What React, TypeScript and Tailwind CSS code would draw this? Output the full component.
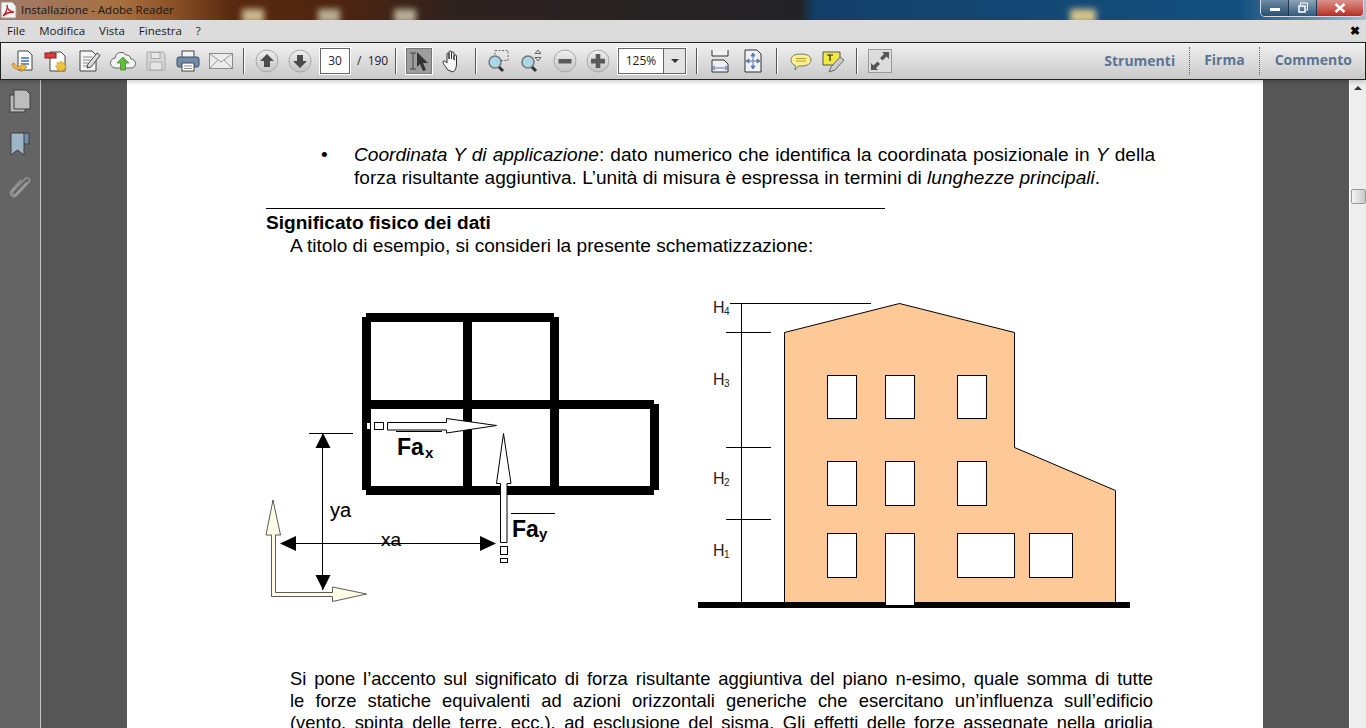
import React from 'react';

const ui = { fontFamily: '"Open Sans", "Noto Sans", sans-serif' };
const arial = 'Liberation Sans, Arial, sans-serif';

function Sep({ className }: { className: string }) {
  return <div className={`w-px h-[26px] bg-[#555] border-r border-white box-content shrink-0 ${className}`} />;
}

function RoundBtn({ kind }: { kind: 'up' | 'down' | 'minus' | 'plus' }) {
  return (
    <svg width="24" height="24" viewBox="0 0 24 24" className="shrink-0">
      <defs>
        <linearGradient id="rb" x1="0" y1="0" x2="0" y2="1">
          <stop offset="0" stopColor="#efefef" />
          <stop offset="1" stopColor="#c4c4c4" />
        </linearGradient>
      </defs>
      <circle cx="12" cy="12" r="11" fill="url(#rb)" stroke="#a8a8a8" />
      {kind === 'up' && <path d="M12 5l7 7h-4v6H9v-6H5z" fill="#4a4a4a" />}
      {kind === 'down' && <path d="M12 19l7-7h-4V6H9v6H5z" fill="#4a4a4a" />}
      {kind === 'minus' && <rect x="5.500" y="10" width="13" height="4.500" fill="#5a5a5a" />}
      {kind === 'plus' && <path d="M9.700 5h4.600v4.800H19v4.600h-4.700V19H9.700v-4.600H5V9.800h4.700z" fill="#5a5a5a" />}
    </svg>
  );
}

function Magnifier({ extra }: { extra: 'box' | 'arrows' }) {
  return (
    <svg width="24" height="24" viewBox="0 0 24 24" className="shrink-0">
      {extra === 'box' ? (
        <rect x="8" y="1.500" width="13" height="10" fill="none" stroke="#666" strokeDasharray="2 1.500" />
      ) : (
        <path d="M18 1l3 3.500h-6zM18 12l3-3.500h-6z" fill="#ddd" stroke="#666" />
      )}
      <path d="M11 17l5 5" stroke="#333" strokeWidth="3" />
      <circle cx="8" cy="13" r="6" fill="#a9d8e8" stroke="#777" strokeWidth="1.500" />
    </svg>
  );
}

function Toolbar() {
  return (
    <div className="h-[38px] bg-gradient-to-b from-[#f1f1f1] to-[#c9c9c9] border border-[#222] flex items-center shrink-0 pl-[10px] relative z-10 shadow-[0_2px_4px_rgba(0,0,0,0.18)]">
      <div className="flex items-center gap-[9px]">
        {/* create pdf */}
        <svg width="24" height="24" viewBox="0 0 24 24" className="shrink-0">
          <path d="M7 2h10l4 4v15H7z" fill="#fff" stroke="#444" />
          <path d="M10 9h8M10 12h8M10 15h8" stroke="#3a6bc0" strokeWidth="1.300" />
          <path d="M1 15c1 5 5 6 9 5v3l6-5-6-4v3c-3 1-6 0-7-3z" fill="#f0b840" stroke="#a87a1a" strokeWidth=".7" />
        </svg>
        <svg width="24" height="24" viewBox="0 0 24 24" className="shrink-0">
          <path d="M6 3h11l4 4v15H6z" fill="#fff" stroke="#444" />
          <rect x="1" y="4" width="11" height="5" fill="#e23b3b" stroke="#8a1c1c" />
          <path d="M17 12l1.500 2 2.500-.5-.5 2.500 2 1.500-2 1.500.5 2.500-2.500-.5-1.500 2-1.500-2-2.500.5.500-2.500-2-1.500 2-1.500-.5-2.500 2.500.5z" fill="#f5c33b" stroke="#b98a1a" strokeWidth=".6" />
        </svg>
        <svg width="24" height="24" viewBox="0 0 24 24" className="shrink-0">
          <path d="M3 2h12l4 4v16H3z" fill="#f5f5f5" stroke="#444" />
          <path d="M6 8h9M6 11h7M6 14h5M6 17h4" stroke="#888" />
          <path d="M10 19l1-4L20 4l3 2.500L14 18z" fill="#ddd" stroke="#444" />
        </svg>
        <svg width="26" height="24" viewBox="0 0 26 24" className="shrink-0">
          <path d="M6 19a5 5 0 0 1-1-10 6 6 0 0 1 11-3 5 5 0 0 1 5 4 4.500 4.500 0 0 1 0 9z" fill="#f2f2f2" stroke="#666" />
          <path d="M13 8l6 6h-3.500v7h-5v-7H7z" fill="#63bb3d" stroke="#3f8426" strokeWidth=".7" />
        </svg>
        <svg width="22" height="24" viewBox="0 0 22 24" className="shrink-0">
          <path d="M2 3h16l2 2v16H2z" fill="#d8d8d8" stroke="#aaa" />
          <rect x="6" y="3.500" width="9" height="6" fill="#e8e8e8" stroke="#aaa" />
          <rect x="5" y="13" width="12" height="8" fill="#e4e4e4" stroke="#aaa" />
        </svg>
        <svg width="24" height="24" viewBox="0 0 24 24" className="shrink-0">
          <rect x="6" y="2" width="12" height="7" fill="#f4f4f4" stroke="#444" />
          <rect x="1" y="8" width="22" height="10" rx="2" fill="#6f8cab" stroke="#3c4c5e" />
          <rect x="6" y="14" width="12" height="8" fill="#fff" stroke="#444" />
          <path d="M8 17h8M8 19.500h8" stroke="#888" />
        </svg>
        <svg width="24" height="24" viewBox="0 0 24 24" className="shrink-0">
          <rect x="0.500" y="4.500" width="23" height="15" fill="#ececec" stroke="#8a8a8a" />
          <path d="M1 5l11 8 11-8M1 19l8-8M23 19l-8-8" fill="none" stroke="#9a9a9a" />
        </svg>
      </div>
      <Sep className="ml-[10px] mr-[10px]" />
      <div className="flex items-center gap-[9px]">
        <RoundBtn kind="up" />
        <RoundBtn kind="down" />
      </div>
      <div className="w-[30px] h-[26px] ml-[8px] shrink-0 bg-white border border-[#666] outline outline-1 outline-white flex items-center justify-center text-[12px] text-[#222]" style={ui}>30</div>
      <div className="ml-[7px] w-[32px] shrink-0 text-[12px] text-[#222] whitespace-pre" style={ui}>/  190</div>
      <Sep className="ml-[6px] mr-[9px]" />
      <div className="w-[26px] h-[26px] shrink-0 bg-[#9d9d9d] border border-[#777] outline outline-1 outline-white flex items-center justify-center">
        <svg width="24" height="24" viewBox="0 0 24 24">
          <path d="M3 4h6M3 20h6M6 4v16" stroke="#444" fill="none" />
          <path d="M10 3l11 11h-5l3 7-3 1-3-7-3 3z" fill="#333" />
        </svg>
      </div>
      <svg width="24" height="24" viewBox="0 0 24 24" className="shrink-0 ml-[9px]">
        <path d="M7 21c-2-3-5-6-5-8 0-1.500 2-1.500 3 0l1 1V5c0-1.500 2-1.500 2 0v5V3c0-1.500 2.500-1.500 2.500 0v7-6c0-1.500 2.500-1.500 2.500 0v7-4c0-1.500 2.500-1.500 2.500 0v8c0 4-1.500 7-3.500 8z" fill="#f6f6f6" stroke="#333" />
      </svg>
      <Sep className="ml-[10px] mr-[10px]" />
      <div className="flex items-center gap-[9px]">
        <Magnifier extra="box" />
        <Magnifier extra="arrows" />
        <RoundBtn kind="minus" />
        <RoundBtn kind="plus" />
      </div>
      <div className="ml-[8px] w-[68px] h-[26px] shrink-0 bg-white border border-[#666] outline outline-1 outline-white flex items-center text-[12px] text-[#222]" style={ui}>
        <div className="flex-1 text-center">125%</div>
        <div className="w-[22px] h-full border-l border-[#666] bg-[#e4e4e4] flex items-center justify-center">
          <div className="w-0 h-0 border-x-[4px] border-t-[4px] border-x-transparent border-t-[#333]" />
        </div>
      </div>
      <Sep className="ml-[10px] mr-[10px]" />
      <svg width="24" height="24" viewBox="0 0 24 24" className="shrink-0 mr-[9px]">
        <path d="M4 1v6h16V1M4 23V11h12l4 4v8z" fill="#f0f0f0" stroke="#333" />
        <path d="M4 19h16M4 19l3-2M4 19l3 2M20 19l-3-2M20 19l-3 2" stroke="#5a78b0" fill="none" />
      </svg>
      <svg width="24" height="24" viewBox="0 0 24 24" className="shrink-0">
        <path d="M4 1h12l4 4v18H4z" fill="#f0f0f0" stroke="#333" />
        <path d="M12 5v14M6 12h12M12 4l-2 3h4zM12 20l-2-3h4zM5 12l3-2v4zM19 12l-3-2v4z" stroke="#5a78b0" fill="#5a78b0" />
      </svg>
      <Sep className="ml-[11px] mr-[11px]" />
      <svg width="24" height="24" viewBox="0 0 24 24" className="shrink-0 mr-[9px]">
        <path d="M2 11c0-4 4-6 10-6s10 2 10 6-4 6-10 6H9.500L6 21l.5-4.500C3.500 15.500 2 13.500 2 11z" fill="#f7f08c" stroke="#777" />
        <path d="M7 9.500h10M7 12h10" stroke="#b59a2a" />
      </svg>
      <svg width="24" height="24" viewBox="0 0 24 24" className="shrink-0">
        <path d="M1 3h17v5l-5 8H1z" fill="#f0ea3c" stroke="#555" />
        <path d="M5 6h6M8 6v6" stroke="#222" strokeWidth="1.200" />
        <path d="M7 23l2-5 9-10 4 3-9 10z" fill="#ccc" stroke="#666" />
      </svg>
      <Sep className="ml-[10px] mr-[10px]" />
      <div className="w-[24px] h-[24px] shrink-0 bg-[#dcdcdc] border border-[#999] flex items-center justify-center">
        <svg width="22" height="22" viewBox="0 0 22 22">
          <path d="M13 2h7v7l-2.500-2.500-4 4-2.500-2.500 4-4zM9 20H2v-7l2.500 2.500 4-4 2.500 2.500-4 4z" fill="#555" />
        </svg>
      </div>
      <div className="flex-1" />
      <div className="flex items-center h-[28px] text-[14px] font-bold text-[#5b7494]" style={ui}>
        <div className="pr-[14px] leading-[26px]">Strumenti</div>
        <div className="h-full border-l border-dotted border-[#666] pl-[14px] pr-[14px]">
          <div className="leading-[26px]">Firma</div>
        </div>
        <div className="h-full border-l border-dotted border-[#666] pl-[15px] pr-[13px]">
          <div className="leading-[26px]">Commento</div>
        </div>
      </div>
    </div>
  );
}

function SideRail() {
  return (
    <div className="w-[41px] shrink-0 bg-[#646464] border-r border-[#c8c8c8] flex flex-col items-center pt-[9px] gap-[19px]">
      <svg width="22" height="24" viewBox="0 0 22 24">
        <rect x="1" y="6" width="15" height="17" fill="#b8b8b8" stroke="#3f3f3f" />
        <path d="M5 1h12l4 4v15H5z" fill="#bdbdbd" stroke="#3f3f3f" />
      </svg>
      <svg width="20" height="24" viewBox="0 0 20 24">
        <rect x="12" y="1" width="7" height="11" fill="#6f90a8" stroke="#3f3f3f" />
        <path d="M1 1h13v22l-6.500-5L1 23z" fill="#9cb6c8" stroke="#3f3f3f" />
      </svg>
      <svg width="22" height="24" viewBox="0 0 22 24">
        <path d="M18 7L7 19c-2 2-5-1-3-3L16 4c3-3 6 1 4 3L8 20c-4 4-9-1-5-5l9-10" fill="none" stroke="#9a9a9a" strokeWidth="1.400" />
      </svg>
    </div>
  );
}

function PlanDiagram() {
  return (
    <svg width="410" height="310" viewBox="0 0 410 310" className="block shrink-0">
      {/* frame */}
      <g fill="#000">
        <rect x="106" y="13" width="188" height="9" />
        <rect x="106" y="100" width="288" height="9" />
        <rect x="106" y="186" width="288" height="9" />
        <rect x="102" y="17" width="9" height="173" />
        <rect x="203" y="17" width="9" height="173" />
        <rect x="290" y="17" width="9" height="173" />
        <rect x="390" y="104" width="9" height="86" />
      </g>
      {/* force x */}
      <rect x="107" y="123" width="3" height="6" fill="#fff" />
      <rect x="114.500" y="122.500" width="9" height="7" fill="#fff" stroke="#000" />
      <path d="M127.500 122.500h59v-4l50 7-50 7.500v-3h-59z" fill="#fff" stroke="#000" />
      <path d="M136 131.500h46" stroke="#000" />
      <text x="137" y="155" fontFamily={arial} fontSize="23" fontWeight="700">Fa</text>
      <text x="165" y="158" fontFamily={arial} fontSize="15" fontWeight="700">x</text>
      {/* force y */}
      <path d="M240.500 242.500v-59h-4l7-50 7.500 50h-4v59z" fill="#fff" stroke="#000" />
      <rect x="240.500" y="246.500" width="7" height="8" fill="#fff" stroke="#000" />
      <rect x="240.500" y="258.500" width="7" height="4" fill="#fff" stroke="#000" />
      <path d="M251 213.500h44" stroke="#000" />
      <text x="252" y="237" fontFamily={arial} fontSize="23" fontWeight="700">Fa</text>
      <text x="279" y="239" fontFamily={arial} fontSize="15" fontWeight="700">y</text>
      {/* dimensions */}
      <path d="M49 133.500h44M62.500 134v156M25 243.500h205" stroke="#000" />
      <path d="M63 133l7.500 15h-15zM63 290l7.500-15h-15zM20 243.500l16-7.500v15zM236 243.500l-16-7.500v15z" fill="#000" />
      <text x="70" y="217" fontFamily={arial} fontSize="20" stroke="#000" strokeWidth=".15">ya</text>
      <text x="121" y="246" fontFamily={arial} fontSize="19" stroke="#000" strokeWidth=".15">xa</text>
      {/* axes */}
      <path d="M11.500 296.500V235H6l7-35 7.500 35h-5v57.500h57V287l34 7-34 7.500v-5z" fill="#fffde5" stroke="#333" strokeWidth="0.800" />
    </svg>
  );
}

function BuildingDiagram() {
  return (
    <svg width="450" height="320" viewBox="0 0 450 320" className="block shrink-0">
      <path d="M94.500 308V37.500L209.500 8.500 324.500 37.500V152.500L425.500 195.500V308z" fill="#fec996" stroke="#000" />
      <g fill="#fff" stroke="#000">
        <rect x="137.500" y="80.500" width="29" height="43" />
        <rect x="195.500" y="80.500" width="29" height="43" />
        <rect x="267.500" y="80.500" width="29" height="43" />
        <rect x="137.500" y="166.500" width="29" height="44" />
        <rect x="195.500" y="166.500" width="29" height="44" />
        <rect x="267.500" y="166.500" width="29" height="44" />
        <rect x="137.500" y="238.500" width="29" height="44" />
        <rect x="267.500" y="238.500" width="57" height="44" />
        <rect x="339.500" y="238.500" width="43" height="44" />
      </g>
      <rect x="8" y="307" width="432" height="6" fill="#000" />
      <path d="M195.500 307V238.500h29V307" fill="#fff" stroke="#000" />
      <rect x="196" y="306" width="28" height="4" fill="#fff" />
      <path d="M51.500 8v299M40 8.500h141M36 37.500h45M36 152.500h45M36 224.500h45" stroke="#000" fill="none" />
      <g fontFamily={arial} fill="#222">
        <text x="23" y="17.500" fontSize="16">H</text><text x="34" y="20" fontSize="10">4</text>
        <text x="23" y="90" fontSize="16">H</text><text x="34" y="92" fontSize="10">3</text>
        <text x="23" y="189" fontSize="16">H</text><text x="34" y="191" fontSize="10">2</text>
        <text x="23" y="261" fontSize="16">H</text><text x="34" y="263" fontSize="10">1</text>
      </g>
    </svg>
  );
}

export default function App() {
  return (
    <div className="w-[1366px] h-[728px] overflow-hidden flex flex-col bg-[#565656]">
      {/* title bar, over a bit of desktop wallpaper */}
      <div className="h-[21px] shrink-0 relative overflow-hidden flex items-start border-b border-[#ddd] bg-[linear-gradient(90deg,#a07a68_0px,#a8703f_120px,#8a5026_175px,#5a2a10_230px,#4b2410_350px,#2d2220_460px,#232326_800px,#123f68_815px,#14507f_1240px,#5e8aa8_1310px,#aebfca_1366px)]">
        {/* blurred desktop icons in the wallpaper */}
        <div className="absolute left-[242px] top-[9px] w-[22px] h-[14px] bg-[#c9b88f] blur-[3px]" />
        <div className="absolute left-[318px] top-[9px] w-[22px] h-[14px] bg-[#b9ae96] blur-[3px]" />
        <div className="absolute left-[394px] top-[9px] w-[22px] h-[14px] bg-[#b9ae96] blur-[3px]" />
        <div className="absolute left-[1070px] top-[9px] w-[26px] h-[14px] bg-[#d6c38a] blur-[3px]" />
        <svg width="18" height="19" viewBox="0 0 18 19" className="shrink-0 relative">
          <path d="M1 2h11l4 4v12H1z" fill="#f5f5f5" stroke="#999" />
          <path d="M3 16c3-3 5-8 4-11 0 4 3 7 7 7-4 0-8 1-11 4z" fill="none" stroke="#c8141a" strokeWidth="1.300" />
        </svg>
        <div className="ml-[3px] relative text-[11.500px] leading-[20px] text-[#161616]" style={ui}>Installazione - Adobe Reader</div>
        <div className="flex-1" />
        <div className="mr-[2px] relative w-[104px] h-[17px] flex rounded-b-[5px] border border-t-0 border-[#cfdbe6] overflow-hidden">
          <div className="w-[28px] bg-gradient-to-b from-[#6f8ba6] to-[#28506f] flex items-center justify-center border-r border-[#20364a]">
            <div className="w-[10px] h-[3px] mt-[3px] bg-white" />
          </div>
          <div className="w-[28px] bg-gradient-to-b from-[#8fa6b8] to-[#2f5a7c] flex items-center justify-center border-r border-[#20364a]">
            <svg width="12" height="12" viewBox="0 0 12 12">
              <path d="M3.500 3V1h7v7H9" fill="none" stroke="#fff" />
              <rect x="2" y="4" width="6" height="6" fill="none" stroke="#fff" strokeWidth="1.500" />
            </svg>
          </div>
          <div className="flex-1 bg-gradient-to-b from-[#d9908a] to-[#b8281c] flex items-center justify-center">
            <svg width="12" height="10" viewBox="0 0 12 10">
              <path d="M1.500 1l9 8M10.500 1l-9 8" stroke="#fff" strokeWidth="2.400" />
            </svg>
          </div>
        </div>
      </div>

      {/* menu bar */}
      <div className="h-[20px] shrink-0 bg-[#dcdcdc] flex items-center pl-[7px] pr-[6px] text-[11.500px] text-[#1a1a1a] gap-[14px]" style={ui}>
        <span>File</span>
        <span>Modifica</span>
        <span>Vista</span>
        <span>Finestra</span>
        <span>?</span>
        <span className="ml-auto font-bold text-[12px] text-black leading-none">✖</span>
      </div>
      <div className="h-px shrink-0 bg-[#dcdcdc]" />

      <Toolbar />

      <div className="flex-1 flex min-h-0">
        <SideRail />
        <div className="flex-1 flex justify-center overflow-hidden">
          <div
            className="w-[1136px] shrink-0 bg-white text-black text-[19.100px] leading-[23px]"
            style={{ fontFamily: '"Liberation Sans", Arial, sans-serif' }}
          >
            <div className="pt-[63px] pl-[139px] pr-[108px]">
              <div className="flex">
                <div className="w-[88px] pl-[55px] shrink-0">•</div>
                <div className="flex-1 min-w-0">
                  <div className="[text-align-last:justify] whitespace-nowrap">
                    <i>Coordinata Y di applicazione</i>: dato numerico che identifica la coordinata posizionale in <i>Y</i> della
                  </div>
                  <div>forza risultante aggiuntiva. L’unità di misura è espressa in termini di <i>lunghezze principali</i>.</div>
                </div>
              </div>
              <div className="mt-[19px] w-[619px] border-t border-black pt-[3px] font-bold leading-[22px]">Significato fisico dei dati</div>
              <div className="pl-[24px]">A titolo di esempio, si consideri la presente schematizzazione:</div>
            </div>
            <div className="flex items-start pl-[133px] mt-[43px]">
              <PlanDiagram />
              <div className="ml-[20px] -mt-[5px]">
                <BuildingDiagram />
              </div>
            </div>
            <div className="mt-[53px] ml-[163px] w-[863px] text-[18.400px] leading-[22px]">
              <div className="[text-align-last:justify] whitespace-nowrap">Si pone l’accento sul significato di forza risultante aggiuntiva del piano n-esimo, quale somma di tutte</div>
              <div className="[text-align-last:justify] whitespace-nowrap">le forze statiche equivalenti ad azioni orizzontali generiche che esercitano un’influenza sull’edificio</div>
              <div className="[text-align-last:justify] whitespace-nowrap">(vento, spinta delle terre, ecc.), ad esclusione del sisma. Gli effetti delle forze assegnate nella griglia</div>
            </div>
          </div>
        </div>
        {/* scrollbar */}
        <div className="w-[17px] shrink-0 bg-[#eeeeee] border-l border-white flex flex-col items-center pt-[6px]">
          <div className="w-0 h-0 border-x-[4px] border-b-[4px] border-x-transparent border-b-[#333]" />
          <div className="mt-[99px] w-[15px] h-[15px] rounded-[2px] border border-[#999] bg-gradient-to-r from-[#f6f6f6] to-[#c8c8c8]" />
        </div>
      </div>
    </div>
  );
}
